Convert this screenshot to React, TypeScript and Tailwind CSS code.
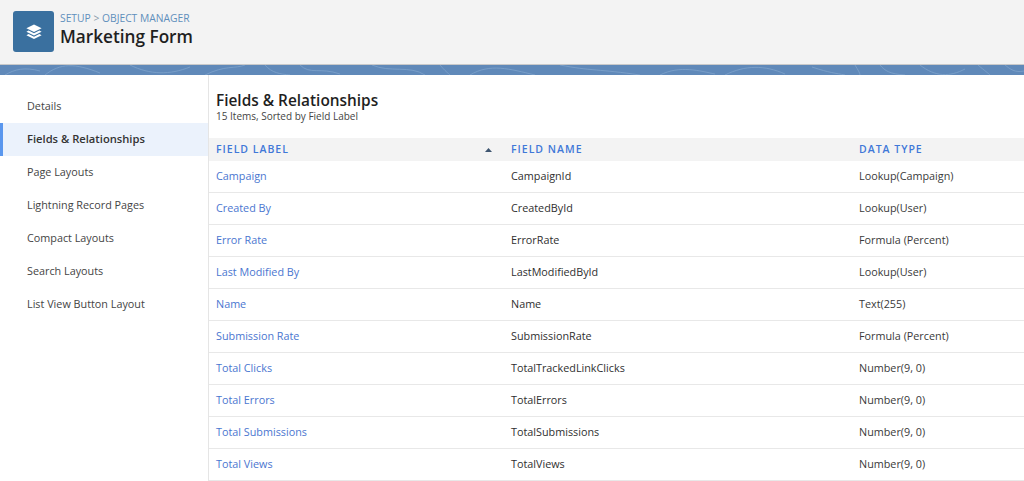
const font = "[font-family:'Open_Sans','Noto_Sans',sans-serif]";

const nav = ["Details", "Fields & Relationships", "Page Layouts", "Lightning Record Pages", "Compact Layouts", "Search Layouts", "List View Button Layout"];
const rows = [
  ["Campaign", "CampaignId", "Lookup(Campaign)"],
  ["Created By", "CreatedById", "Lookup(User)"],
  ["Error Rate", "ErrorRate", "Formula (Percent)"],
  ["Last Modified By", "LastModifiedById", "Lookup(User)"],
  ["Name", "Name", "Text(255)"],
  ["Submission Rate", "SubmissionRate", "Formula (Percent)"],
  ["Total Clicks", "TotalTrackedLinkClicks", "Number(9, 0)"],
  ["Total Errors", "TotalErrors", "Number(9, 0)"],
  ["Total Submissions", "TotalSubmissions", "Number(9, 0)"],
  ["Total Views", "TotalViews", "Number(9, 0)"],
];

function Banner() {
  return (
    <svg className="block h-[10px] w-full bg-[#6089b9]" viewBox="0 0 1024 10" preserveAspectRatio="none" fill="none" stroke="#7fa3cc" strokeWidth="0.8">
      <path d="M5 10C15 4 25 2 40 6M45 10C60 -2 75 -2 100 8M130 0C150 10 170 10 190 2M205 10C225 0 235 4 245 0M265 0C272 8 280 9 290 10M300 0C310 10 320 2 340 9M372 0C390 8 410 0 425 10M440 0C445 6 448 8 450 10M470 10C490 -2 510 4 535 10M560 0C590 6 600 4 640 10M660 10C680 0 700 6 715 9M725 10C745 0 765 0 785 9M812 2C830 8 835 8 845 10M855 0C858 5 860 8 860 10M880 0C885 6 890 9 905 10M920 0C935 12 950 12 965 4M978 0C985 6 988 8 990 10M1005 0C1010 4 1015 8 1024 6" />
    </svg>
  );
}

export default function App() {
  return (
    <div className={`${font} h-[481px] w-[1024px] overflow-hidden bg-white text-[#3e3e3c]`}>
      <header className="flex h-[65px] items-center border-b border-[#c9c9c9] bg-[#f3f3f3] pl-[13px]">
        <div className="-mt-[1px] flex h-[41px] w-[41px] items-center justify-center rounded-[3px] bg-[#3a709f]">
          <svg width="18" height="18" viewBox="0 0 18 18" fill="#ffffff">
            <path d="M9 1.5 16.6 5.2 9 8.9 1.4 5.2Z" />
            <path d="M3.6 7.6 9 10.2 14.4 7.6 16.6 8.7 9 12.4 1.4 8.7Z" />
            <path d="M3.6 11.1 9 13.7 14.4 11.1 16.6 12.2 9 15.9 1.4 12.2Z" />
          </svg>
        </div>
        <div className="ml-[6px] -mt-[5px]">
          <div className="text-[10.3px] leading-[14px] text-[#5f8fbc]">SETUP <span className="text-[#8a9aa8]">&gt;</span> OBJECT MANAGER</div>
          <div className="text-[17.2px] leading-[23px] font-semibold text-[#1f1f1f]">Marketing Form</div>
        </div>
      </header>
      <Banner />
      <div className="flex">
        <nav className="h-[406px] w-[209px] shrink-0 border-r border-[#e5e5e5] pt-[15px]">
          {nav.map((n, i) => (
            <div
              key={n}
              className={`flex h-[33px] items-center ${i === 1 ? "border-l-[3px] border-[#5a97ee] bg-[#ebf2fc] pl-[24px] text-[11.2px] font-semibold text-[#333333]" : "pl-[27px] text-[10.8px] text-[#444444]"}`}
            >
              {n}
            </div>
          ))}
        </nav>
        <main className="min-w-0 flex-1">
          <div className="h-[63px] pl-[7px] pt-[16px]">
            <h1 className="text-[15.4px] leading-[20px] font-semibold text-[#1f1f1f]">Fields &amp; Relationships</h1>
            <p className="-mt-[2px] text-[10px] leading-[14px] text-[#444444]">15 Items, Sorted by Field Label</p>
          </div>
          <div className="flex h-[23px] items-center bg-[#f3f3f3] text-[10.5px] font-semibold tracking-[1px] text-[#3f78d8]">
            <div className="flex w-[302px] items-center justify-between pl-[7px] pr-[19px]">
              <span>FIELD LABEL</span>
              <svg width="7" height="4" viewBox="0 0 7 4" fill="#3e5570"><path d="M3.5 0 7 4H0Z" /></svg>
            </div>
            <div className="w-[348px]">FIELD NAME</div>
            <div>DATA TYPE</div>
          </div>
          {rows.map((r) => (
            <div key={r[0]} className="flex h-[32px] items-center border-b border-[#e8e8e8] pb-[1px] text-[10.8px]">
              <div className="w-[302px] pl-[7px] text-[#4a76d0]">{r[0]}</div>
              <div className="w-[348px] text-[#2f2f2f]">{r[1]}</div>
              <div className="text-[#3a3a3a]">{r[2]}</div>
            </div>
          ))}
        </main>
      </div>
    </div>
  );
}
